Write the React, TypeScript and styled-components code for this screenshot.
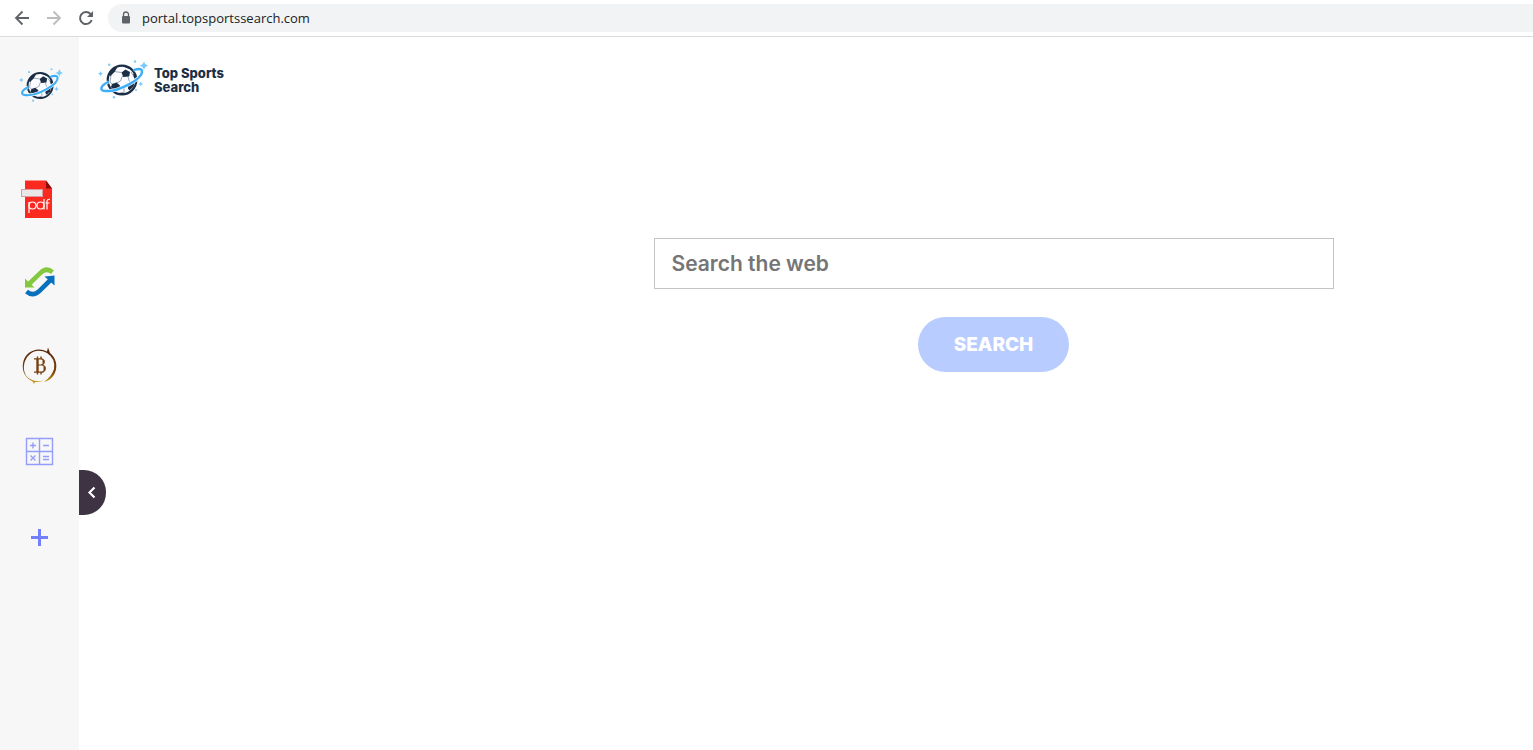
import React from 'react';
import styled, { createGlobalStyle } from 'styled-components';

const GlobalStyle = createGlobalStyle`
  * { box-sizing: border-box; }
  body { margin: 0; background: #fff; }
  svg { display: block; }
`;

const Page = styled.div`
  min-height: 100vh;
  display: flex;
  flex-direction: column;
  font-family: Inter, "Liberation Sans", sans-serif;
`;

const BrowserBar = styled.header`
  display: flex;
  align-items: center;
  height: 37px;
  padding-left: 12px;
  gap: 12px;
  border-bottom: 1px solid #dadce0;
  background: #fff;
`;

const IconButton = styled.button`
  width: 20px;
  height: 20px;
  padding: 0;
  border: 0;
  background: none;
  color: #5f6368;
  &:disabled { color: #babcbe; }
`;

const AddressBar = styled.label`
  display: flex;
  flex: 1;
  align-items: center;
  gap: 8px;
  height: 28px;
  padding-left: 10px;
  border-radius: 14px 0 0 14px;
  background: #f1f3f4;
`;

const AddressInput = styled.input`
  flex: 1;
  padding: 0;
  border: 0;
  outline: 0;
  background: none;
  color: #202124;
  font: 13px/20px "Open Sans", "Noto Sans", sans-serif;
`;

const Body = styled.div`
  display: flex;
  flex: 1;
`;

const Sidebar = styled.aside`
  position: relative;
  width: 79px;
  flex: none;
  background: #f7f7f7;
`;

const SidebarLogo = styled.a`
  display: flex;
  align-items: center;
  justify-content: center;
  height: 96px;
  margin-bottom: 22px;
  padding-left: 2px;
`;

const AppLink = styled.a`
  display: flex;
  align-items: center;
  justify-content: center;
  height: 85px;
`;

const CollapseButton = styled.button`
  position: absolute;
  top: 433px;
  left: 100%;
  width: 27px;
  height: 45px;
  padding: 0;
  border: 0;
  border-radius: 0 22px 22px 0;
  background: #3d3342;
`;

const Main = styled.main`
  flex: 1;
  min-width: 0;
`;

const Brand = styled.a`
  display: flex;
  width: fit-content;
  align-items: center;
  gap: 6px;
  padding: 23px 0 0 19px;
  color: #1b2e46;
  font-size: 13px;
  font-weight: 800;
  line-height: 14px;
  text-decoration: none;
`;

const SearchForm = styled.form`
  display: flex;
  flex-direction: column;
  align-items: center;
  gap: 28px;
  padding: 138px 0 0 375px;
`;

const SearchInput = styled.input`
  width: 680px;
  max-width: 100%;
  height: 51px;
  padding: 0 17px;
  border: 1px solid #c4c4c4;
  border-radius: 0;
  background: #fff;
  font: 600 21px/30px Inter, sans-serif;
  &::placeholder { color: #757575; opacity: 1; }
`;

const SearchButton = styled.button`
  width: 151px;
  height: 55px;
  padding: 0;
  border: 0;
  border-radius: 28px;
  background: #b9ccff;
  color: #fff;
  font: 800 19px/30px Inter, sans-serif;
`;

const Star = ({ x, y, r }: { x: number; y: number; r: number }) => (
  <path
    fill="#79cbfb"
    d={`M${x} ${y - r}Q${x + r * 0.15} ${y - r * 0.15} ${x + r} ${y}Q${x + r * 0.15} ${y + r * 0.15} ${x} ${y + r}Q${x - r * 0.15} ${y + r * 0.15} ${x - r} ${y}Q${x - r * 0.15} ${y - r * 0.15} ${x} ${y - r}Z`}
  />
);

const BallLogo = ({ width, height }: { width: number; height: number }) => (
  <svg width={width} height={height} viewBox="0 0 50 40" aria-hidden="true">
    <circle cx="24" cy="20" r="14.3" fill="#fafcff" stroke="#1b2e46" strokeWidth="2.2" />
    <path d="M16 11.500l7.500 1M24.500 16l-2 5-4 2M30 17l1.500 4.500M13 15l-1 7 2 2M21 27l5 2 4-4M26 29l0 5M33 12l4 6" stroke="#8b99ab" strokeWidth="0.900" fill="none" />
    <g fill="#1b2e46">
      <path d="M11 15l2-5 5-3.500 1 1.500-2.500 4-4 4z" />
      <path d="M23.500 12.500l4-3 4.500 2.500-.8 4.500-6 .5z" />
      <path d="M14 24l4.500-1.500 3.500 3-1.500 4-5 .5-2.500-3z" />
      <path d="M30 24.500l3.500-3 3.500-1-1.500 6-4 4-1.500-2z" />
      <path d="M25 5l6 1.500 3 3-4-1-5-2z" />
      <path d="M35 13l2.500 3 .5 4-2-2z" />
      <path d="M20 33l5-.5 3 1.500-3 1z" />
    </g>
    <path d="M10 22C2 26 1 31 8 31C20 32 45 19 44 11C43.500 8.500 40 8.500 36 10" fill="none" stroke="#f8fbff" strokeWidth="3.600" />
    <path d="M10 22C2 26 1 31 8 31C20 32 45 19 44 11C43.500 8.500 40 8.500 36 10" fill="none" stroke="#3eaef8" strokeWidth="2.400" strokeLinecap="round" />
    <Star x={46} y={5.7} r={4.6} />
    <Star x={2.5} y={13.7} r={2.6} />
    <Star x={42.7} y={24} r={2.6} />
    <g fill="#79cbfb">
      <circle cx="11.300" cy="4.700" r="1.200" />
      <circle cx="37" cy="1.500" r="1.200" />
      <circle cx="16" cy="37.300" r="1.200" />
      <circle cx="38" cy="30" r="1" />
    </g>
  </svg>
);

const AppIcon = ({ children }: { children: React.ReactNode }) => (
  <svg width="43" height="43" viewBox="0 0 43 43" aria-hidden="true">{children}</svg>
);

const PdfIcon = () => (
  <AppIcon>
    <path d="M7 4.500h21l6 8V42H7z" fill="#fb2a20" />
    <path d="M28 4.500l6 8h-6z" fill="#8d0a08" />
    <rect x="3.500" y="13.500" width="21" height="7" fill="#e8e6e7" stroke="#d99aa0" />
    <g fill="none" stroke="#fff" strokeWidth="1.200">
      <circle cx="14.500" cy="29.500" r="3.500" />
      <path d="M11 26v11" />
      <circle cx="22.500" cy="29.500" r="3.500" />
      <path d="M26 23v10.500M29 33.500V25.500q0-2.500 3-2.200M27.500 27h4" />
    </g>
  </AppIcon>
);

const ConvertIcon = () => (
  <AppIcon>
    <path d="M11 23L22.500 11.800Q28.500 6 34.500 11.200" fill="none" stroke="#84c83e" strokeWidth="4.600" />
    <path d="M7 17.500V26.500H16.500z" fill="#84c83e" />
    <path d="M33 18.500L21.500 29.800Q15 36 8.500 30.500" fill="none" stroke="#0870bd" strokeWidth="4.600" />
    <path d="M26.500 15.500L36.500 14.500V24.500z" fill="#0870bd" />
  </AppIcon>
);

const BitcoinIcon = () => (
  <AppIcon>
    <defs>
      <linearGradient id="coin" x1="0" y1="0" x2="0" y2="1">
        <stop offset="0" stopColor="#55250b" />
        <stop offset="0.650" stopColor="#78410d" />
        <stop offset="1" stopColor="#d2a10b" />
      </linearGradient>
    </defs>
    <path fill="url(#coin)" d="M16 38L14.500 35.300C1 30 2 9 15 4.800Q22 2 29 5.500L30 1.500L32 7C43 16 39 33 26 36Q34 30 36 23Q38 13 29 7Q22 3 15 6C4 12 3 28 12 33Q18 36.500 26 34.500Q21 36.500 17 35.800Z" />
    <g fill="none" stroke="#78400f">
      <path d="M19.500 13v13.500" strokeWidth="2.400" />
      <path d="M16 12.800h7c4 0 4 6 0 6.200h-3M20 19h3.500c5 0 4.500 7.200-.5 7.200h-7" strokeWidth="1.200" />
      <path d="M19.500 10.500v2.500M23 10.500v2.500M19.500 26v2.500M23 26v2.500" strokeWidth="1.400" />
      <path d="M25.500 14v3.500M26.500 20.500v4" strokeWidth="2" />
    </g>
  </AppIcon>
);

const CalculatorIcon = () => (
  <AppIcon>
    <g fill="none" stroke="#929dfc" strokeWidth="1.400">
      <path d="M8.500 7.500h26v26h-26zM21.500 7.500v26M8.500 20.500h26" />
      <path d="M12 14.500h6M15 11.500v6M25 14.500h6M12.500 24.500l5 5M17.500 24.500l-5 5M25 25.500h6M25 28.500h6" />
    </g>
  </AppIcon>
);

const PlusIcon = () => (
  <AppIcon>
    <path d="M13 21.500h17M21.500 13v17" stroke="#737ffc" strokeWidth="3" />
  </AppIcon>
);

const apps = [
  { label: 'PDF', Icon: PdfIcon },
  { label: 'Converter', Icon: ConvertIcon },
  { label: 'Bitcoin', Icon: BitcoinIcon },
  { label: 'Calculator', Icon: CalculatorIcon },
  { label: 'Add', Icon: PlusIcon },
];

export default function App() {
  return (
    <Page>
      <GlobalStyle />
      <BrowserBar>
        <IconButton aria-label="Back">
          <svg width="20" height="20" viewBox="0 0 20 20" fill="none" stroke="currentColor" strokeWidth="1.800">
            <path d="M17 10H4M10.500 3.500L4 10l6.500 6.500" />
          </svg>
        </IconButton>
        <IconButton aria-label="Forward" disabled>
          <svg width="20" height="20" viewBox="0 0 20 20" fill="none" stroke="currentColor" strokeWidth="1.800">
            <path d="M3 10h13M9.500 3.500L16 10l-6.500 6.500" />
          </svg>
        </IconButton>
        <IconButton aria-label="Reload">
          <svg width="20" height="20" viewBox="0 0 20 20" fill="none" stroke="currentColor" strokeWidth="2">
            <path d="M15.700 12A6 6 0 1 1 14.500 6L16 7.500" />
            <path d="M17 3v6h-6z" fill="currentColor" stroke="none" />
          </svg>
        </IconButton>
        <AddressBar>
          <svg width="16" height="16" viewBox="0 0 16 16" aria-hidden="true">
            <rect x="4" y="6" width="8" height="7.500" rx="1" fill="#5f6368" />
            <path d="M5.500 6.500V4.500a2.500 2.500 0 0 1 5 0v2" fill="none" stroke="#5f6368" strokeWidth="1.300" />
          </svg>
          <AddressInput aria-label="Address" defaultValue="portal.topsportssearch.com" />
        </AddressBar>
      </BrowserBar>
      <Body>
        <Sidebar>
          <SidebarLogo href="#" aria-label="Top Sports Search home">
            <BallLogo width={44} height={35} />
          </SidebarLogo>
          <nav>
            {apps.map(({ label, Icon }) => (
              <AppLink key={label} href="#" aria-label={label}>
                <Icon />
              </AppLink>
            ))}
          </nav>
          <CollapseButton aria-label="Collapse sidebar">
            <svg width="27" height="45" viewBox="0 0 27 45" fill="none" stroke="#fff" strokeWidth="2.200">
              <path d="M15.500 17.500l-5 5 5 5" />
            </svg>
          </CollapseButton>
        </Sidebar>
        <Main>
          <Brand href="#">
            <BallLogo width={50} height={40} />
            <span>Top Sports<br />Search</span>
          </Brand>
          <SearchForm>
            <SearchInput type="text" aria-label="Search the web" placeholder="Search the web" />
            <SearchButton type="button">SEARCH</SearchButton>
          </SearchForm>
        </Main>
      </Body>
    </Page>
  );
}
